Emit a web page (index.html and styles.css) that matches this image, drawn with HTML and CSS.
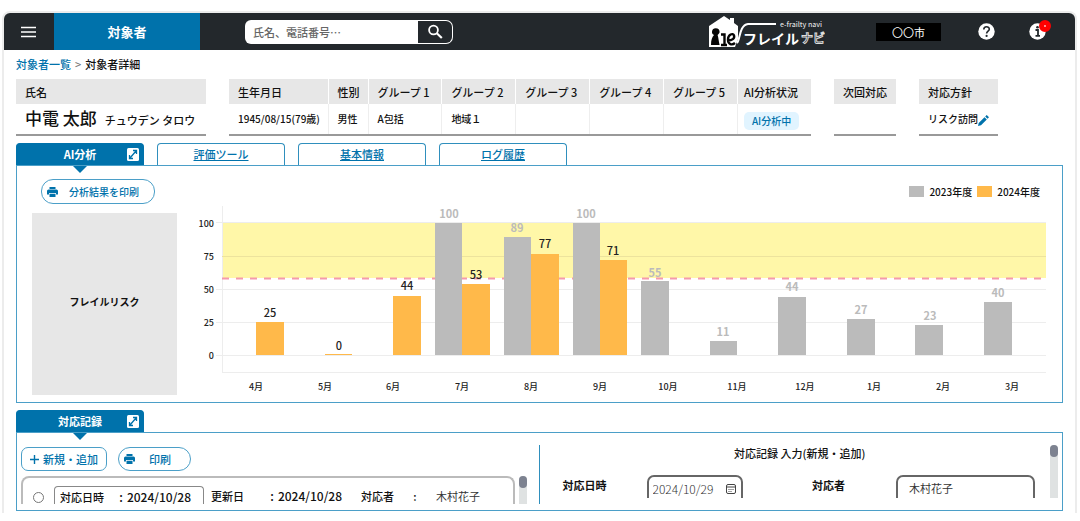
FILE: index.html
```html
<!DOCTYPE html>
<html lang="ja">
<head>
<meta charset="utf-8">
<title>対象者詳細</title>
<link rel="stylesheet" href="styles.css">
</head>
<body>
<div class="app">
  <header class="topbar">
    <button class="menu" type="button" aria-label="メニュー">
      <svg width="16" height="12" viewBox="0 0 16 12"><path d="M0 1.5h15M0 6h15M0 10.5h15" stroke="#fff" stroke-width="1.6"/></svg>
    </button>
    <div class="section-name">対象者</div>
    <form class="search" role="search">
      <input class="search-input" type="text" aria-label="検索" placeholder="氏名、電話番号…">
      <button class="search-button" type="button" aria-label="検索する">
        <svg width="16" height="16" viewBox="0 0 16 16" fill="none" stroke="#fff"><circle cx="6.5" cy="6" r="4.4" stroke-width="1.8"/><path d="M9.8 9.3L14.8 14" stroke-width="2.2"/></svg>
      </button>
    </form>
    <div class="brand">
      <svg width="116" height="33" viewBox="0 0 116 33" aria-label="フレイルナビ">
        <path d="M0 32V11L15 1l6 4V3h4v5l4 3v13l-3 8z" fill="#fff"/>
        <path d="M2 30c0-5 1-8 3-10-2-1-2-2-2-3a3.800 3.800 0 0 1 7.600 0c0 1-1 2-2 3 1 3 1 6 2 10z" fill="#050505"/>
        <path d="M12 19.500h3.500V30M12 30h6M19 25.500c4 0 7-2 6-5s-6-1-6 4 4 6 7 3.500" fill="none" stroke="#050505" stroke-width="2.400"/>
        <path d="M28 28c3-2 2-18 11-19h28" fill="none" stroke="#fff" stroke-width="2"/>
        <text x="71" y="12" class="brand-sub">e-frailty navi</text>
        <text x="34" y="29" class="brand-main">フレイル</text>
        <text x="92" y="28" class="brand-outline">ナビ</text>
      </svg>
    </div>
    <div class="city">〇〇市</div>
    <button class="icon-button help" type="button" aria-label="ヘルプ">
      <svg width="17" height="17" viewBox="0 0 17 17"><circle cx="8.500" cy="8.500" r="8.200" fill="#fff"/><path d="M5.800 6.500c0-3.600 5.500-3.500 5.500-.3 0 2-2.700 2-2.700 4.400" fill="none" stroke="#23282c" stroke-width="1.600"/><circle cx="8.600" cy="12.900" r="1.100" fill="#23282c"/></svg>
    </button>
    <button class="icon-button info" type="button" aria-label="お知らせ">
      <svg width="17" height="17" viewBox="0 0 17 17"><circle cx="8.500" cy="8.500" r="8.200" fill="#fff"/><path d="M6.500 7h2.500v5.500M6.500 12.800h4.500" fill="none" stroke="#23282c" stroke-width="1.800"/><circle cx="8.500" cy="4.300" r="1.300" fill="#23282c"/></svg>
      <span class="badge"></span>
    </button>
  </header>

  <main class="content">
    <nav class="crumbs"><a href="#">対象者一覧</a><span class="sep">&gt;</span><span>対象者詳細</span></nav>

    <div class="summary">
      <table class="facts name">
        <tr><th>氏名</th></tr>
        <tr><td><span class="person">中電 太郎</span><span class="kana">チュウデン タロウ</span></td></tr>
      </table>
      <table class="facts profile">
        <colgroup><col class="c-birth"><col class="c-sex"><col><col><col><col><col><col></colgroup>
        <tr><th>生年月日</th><th>性別</th><th>グループ 1</th><th>グループ 2</th><th>グループ 3</th><th>グループ 4</th><th>グループ 5</th><th class="status">AI分析状況</th></tr>
        <tr><td>1945/08/15(79歳)</td><td>男性</td><td>A包括</td><td>地域１</td><td></td><td></td><td></td><td class="status"><span class="chip">AI分析中</span></td></tr>
      </table>
      <table class="facts next">
        <tr><th>次回対応</th></tr>
        <tr><td></td></tr>
      </table>
      <table class="facts policy">
        <tr><th>対応方針</th></tr>
        <tr><td>リスク訪問<button class="edit" type="button" aria-label="編集"><svg width="11" height="11" viewBox="0 0 11 11" fill="#0072ab"><path d="M0 11l.7-3L6.500 2.200l2.300 2.300L3 10.300zM7.200 1.500L8.700 0 11 2.300 9.500 3.800z"/></svg></button></td></tr>
      </table>
    </div>

    <section>
      <div class="tabs">
        <div class="tab active"><span>AI分析</span>
          <button class="expand" type="button" aria-label="拡大"><svg width="12" height="13" viewBox="0 0 12 13"><rect width="12" height="13" rx="1.500" fill="#fff"/><path d="M3 10L9 3M6 2.500h3.500V6M2.500 7v3.500H6" fill="none" stroke="#0072ab" stroke-width="1.300"/></svg></button>
        </div>
        <a class="tab" href="#">評価ツール</a>
        <a class="tab" href="#">基本情報</a>
        <a class="tab" href="#">ログ履歴</a>
      </div>
      <div class="panel analysis">
        <div class="analysis-head">
          <button class="outline pill wide" type="button">
            <svg class="printer" width="11" height="10" viewBox="0 0 11 10"><path d="M2.500 0h6v2h-6zM1.500 2.500h8A1.500 1.500 0 0 1 11 4v3.500H9V6H2v1.500H0V4a1.500 1.500 0 0 1 1.500-1.500zM2.500 6.800h6V10h-6z" fill="#0072ab"/></svg>
            分析結果を印刷
          </button>
          <div class="legend"><span class="swatch y2023"></span>2023年度<span class="swatch y2024"></span>2024年度</div>
        </div>
        <div class="analysis-body">
          <div class="risk">フレイルリスク</div>
          <svg class="chart" viewBox="195 205 852 190" role="img" aria-label="フレイルリスク 月別">
            <rect x="222" y="223" width="824" height="55" fill="#fff7a8"/>
            <g class="grid">
              <path d="M216 222.500H1046M216 289.500H1046M216 322.500H1046M216 355.500H1046M222 372.500H1046M222.500 206V372"/>
              <path class="on-band" d="M222 256.500H1046"/>
            </g>
            <path class="threshold" d="M222 278.500H1046"/>
            <g class="b2023">
              <rect x="435" y="223" width="27" height="132"/>
              <rect x="504" y="237" width="27" height="118"/>
              <rect x="573" y="223" width="27" height="132"/>
              <rect x="641" y="281" width="28" height="74"/>
              <rect x="710" y="341" width="27" height="14"/>
              <rect x="778" y="297" width="28" height="58"/>
              <rect x="847" y="319" width="28" height="36"/>
              <rect x="915" y="325" width="28" height="30"/>
              <rect x="984" y="302" width="28" height="53"/>
            </g>
            <g class="b2024">
              <rect x="256" y="322" width="28" height="33"/>
              <rect x="325" y="354" width="27" height="1"/>
              <rect x="393" y="296" width="28" height="59"/>
              <rect x="462" y="284" width="28" height="71"/>
              <rect x="531" y="254" width="28" height="101"/>
              <rect x="600" y="260" width="27" height="95"/>
            </g>
            <g class="v2023">
              <text x="449" y="218">100</text><text x="517" y="232">89</text><text x="586" y="218">100</text><text x="655" y="277">55</text><text x="723" y="336">11</text><text x="792" y="291">44</text><text x="861" y="314">27</text><text x="930" y="320">23</text><text x="998" y="297">40</text>
            </g>
            <g class="v2024">
              <text x="270" y="317">25</text><text x="339" y="350">0</text><text x="407" y="290">44</text><text x="476" y="279">53</text><text x="545" y="248">77</text><text x="613" y="255">71</text>
            </g>
            <g class="ticks">
              <text x="214" y="227">100</text><text x="214" y="260">75</text><text x="214" y="293">50</text><text x="214" y="326">25</text><text x="214" y="359">0</text>
            </g>
            <g class="months">
              <text x="256" y="390">4月</text><text x="325" y="390">5月</text><text x="393" y="390">6月</text><text x="462" y="390">7月</text><text x="531" y="390">8月</text><text x="600" y="390">9月</text><text x="668" y="390">10月</text><text x="737" y="390">11月</text><text x="805" y="390">12月</text><text x="874" y="390">1月</text><text x="943" y="390">2月</text><text x="1012" y="390">3月</text>
            </g>
          </svg>
        </div>
      </div>
    </section>

    <section class="records">
      <div class="tabs">
        <div class="tab active"><span>対応記録</span>
          <button class="expand" type="button" aria-label="拡大"><svg width="12" height="13" viewBox="0 0 12 13"><rect width="12" height="13" rx="1.500" fill="#fff"/><path d="M3 10L9 3M6 2.500h3.500V6M2.500 7v3.500H6" fill="none" stroke="#0072ab" stroke-width="1.300"/></svg></button>
        </div>
      </div>
      <div class="panel record-panel">
        <div class="list-side">
          <div class="actions">
            <button class="outline add" type="button"><svg width="9" height="9" viewBox="0 0 9 9"><path d="M4.500 0v9M0 4.500h9" stroke="#0072ab" stroke-width="1.400"/></svg>新規・追加</button>
            <button class="outline pill print" type="button"><svg class="printer" width="11" height="10" viewBox="0 0 11 10"><path d="M2.500 0h6v2h-6zM1.500 2.500h8A1.500 1.500 0 0 1 11 4v3.500H9V6H2v1.500H0V4a1.500 1.500 0 0 1 1.500-1.500zM2.500 6.800h6V10h-6z" fill="#0072ab"/></svg>印刷</button>
          </div>
          <div class="scroll-row">
            <div class="card">
              <input class="pick" type="radio" name="record" id="record-1">
              <label class="when" for="record-1"><span>対応日時</span><span class="stamp"><span>:</span><span>2024/10/28</span></span></label>
              <div class="pair updated"><span>更新日</span><span class="stamp"><span>:</span><span>2024/10/28</span></span></div>
              <div class="pair staff"><span>対応者</span><span>:</span><span class="plain">木村花子</span></div>
            </div>
            <div class="scrollbar"></div>
          </div>
        </div>
        <div class="form-side">
          <form class="entry">
            <h2>対応記録 入力(新規・追加)</h2>
            <div class="fields">
              <label for="entry-date">対応日時</label>
              <div class="date-box">
                <input type="text" id="entry-date" value="2024/10/29">
                <svg width="10" height="10" viewBox="0 0 10 10" fill="none" stroke="#444"><rect x=".5" y=".5" width="9" height="9" rx="1.500"/><path d="M.5 3h9"/><path d="M2.500 5.500h5M2.500 7.500h3" stroke-dasharray="1 1"/></svg>
              </div>
              <label class="staff-label" for="entry-staff">対応者</label>
              <input class="staff-box" type="text" id="entry-staff" value="木村花子">
            </div>
          </form>
          <div class="scrollbar"></div>
        </div>
      </div>
    </section>
  </main>
</div>
</body>
</html>
```
FILE: styles.css
```css
* { box-sizing: border-box; }

body {
  margin: 0;
  background: #fff;
  color: #111;
  font: 500 11px/16px "Noto Sans CJK JP", sans-serif;
}

button, input { font: inherit; color: inherit; }
button { padding: 0; border: 0; background: none; }
svg { display: block; flex: none; }
a { color: #0072ab; }

.app {
  margin: 11px 3px 8px 2px;
  border: solid #ececec;
  border-width: 2px 2px 0;
  border-radius: 8px 8px 0 0;
}

/* Top bar */
.topbar {
  display: flex;
  align-items: center;
  height: 37px;
  background: #23282c;
  border-radius: 6px 6px 0 0;
  color: #fff;
}
.menu { display: flex; justify-content: center; width: 50px; }
.section-name {
  width: 146px;
  background: #0072ab;
  font-size: 13px;
  font-weight: 700;
  line-height: 37px;
  text-align: center;
}
.search { display: flex; width: 208px; height: 24px; margin-left: 45px; }
.search-input {
  flex: 1;
  min-width: 0;
  padding: 0 8px;
  border: 0;
  border-radius: 6px 0 0 6px;
  background: #fff;
  color: #333;
}
.search-input::placeholder { color: #666; opacity: 1; }
.search-button {
  display: flex;
  align-items: center;
  justify-content: center;
  width: 35px;
  border: 1px solid #fff;
  border-left: 0;
  border-radius: 0 7px 7px 0;
}
.brand { margin-left: auto; }
.brand-sub { font-size: 7px; fill: #ddd; }
.brand-main { font-size: 14px; font-weight: 700; fill: #fff; }
.brand-outline { font-size: 12px; font-weight: 700; fill: #23282c; stroke: #ddd; stroke-width: 1px; }
.city {
  width: 65px;
  margin-left: 51px;
  background: #000;
  font-weight: 400;
  line-height: 18px;
  text-align: center;
}
.icon-button { position: relative; }
.help { margin-left: 37px; }
.info { margin: 0 29px 0 34px; }
.badge {
  position: absolute;
  top: -3px;
  right: -5px;
  width: 12px;
  height: 12px;
  border: 5px solid #f00;
  border-radius: 50%;
  background: #fbb;
}

.content { padding: 6px 12px 2px; }
.crumbs a { text-decoration: none; }
.sep { margin: 0 4px; color: #777; }

/* Subject summary */
.summary { display: flex; gap: 23px; margin-top: 7px; padding-right: 65px; }
.facts { border-collapse: collapse; table-layout: fixed; border-bottom: 2px solid #999; }
.name { flex: 190 1 0; }
.profile { flex: 582 1 0; }
.next { flex: 62 1 0; }
.policy { flex: 79 1 0; }
.c-birth { width: 99px; }
.c-sex { width: 40px; }
.facts th {
  height: 25px;
  padding: 0 0 0 9px;
  background: #e7e7e7;
  font-weight: 500;
  text-align: left;
  white-space: nowrap;
}
.facts td { height: 31px; padding: 0 0 0 9px; font-size: 10px; white-space: nowrap; }
.profile th + th, .profile td + td { border-left: 1px solid #eee; }
.profile th + th { border-left-color: #fff; }
.facts .status { padding-left: 6px; }
.facts td.status { padding-top: 4px; }
.facts .person { font-size: 17px; }
.kana { margin-left: 8px; font-size: 11px; }
.chip {
  display: inline-block;
  padding: 1px 8px;
  border-radius: 5px;
  background: #e1f4ff;
  color: #0072ab;
}
.edit { display: inline-block; vertical-align: middle; }

/* Tabs and panels */
.tabs { display: flex; gap: 13px; margin-top: 7px; }
.tab {
  position: relative;
  width: 128px;
  height: 22px;
  border: 1px solid #2f8fbd;
  border-bottom: 0;
  border-radius: 4px 4px 0 0;
  line-height: 20px;
  text-align: center;
}
.active { background: #0072ab; border-color: #0072ab; color: #fff; font-weight: 700; }
.active::after {
  content: "";
  position: absolute;
  top: 22px;
  left: 56px;
  border: solid transparent;
  border-width: 7px 7px 0;
  border-top-color: #0072ab;
}
.expand { position: absolute; top: 4px; right: 4px; }
.panel { border: 1px solid #4b9fc8; }
.analysis { padding: 13px 15px 7px; }
.analysis-head { display: flex; align-items: center; justify-content: space-between; padding: 0 7px 0 9px; }
.outline {
  display: flex;
  align-items: center;
  height: 24px;
  border: 1px solid #4b9fc8;
  border-radius: 7px;
  background: #fff;
  color: #0072ab;
}
.pill { padding-left: 5px; border-radius: 12px; }
.wide { width: 114px; gap: 11px; height: 25px; font-size: 10px; }
.legend { display: flex; align-items: center; gap: 5px; font-size: 10px; }
.swatch { width: 15px; height: 11px; }
.y2023 { background: #bbb; }
.y2024 { background: #ffb94a; }
.analysis-body { display: flex; align-items: stretch; gap: 18px; margin-top: 1px; }
.risk {
  display: flex;
  align-items: center;
  justify-content: center;
  width: 145px;
  margin-top: 8px;
  padding-bottom: 4px;
  background: #e7e7e7;
  font-size: 10px;
  font-weight: 700;
}
.chart { flex: 1; min-width: 0; }
.grid { fill: none; stroke: #ededed; }
.on-band { stroke: #ede39d; }
.threshold { stroke: #f59aac; stroke-width: 2px; stroke-dasharray: 7px 7px; }
.b2023 { fill: #bbb; }
.b2024 { fill: #ffb94a; }
.v2023, .v2024 { font-size: 11px; text-anchor: middle; }
.v2023 { fill: #bbb; font-weight: 700; }
.v2024 { fill: #222; }
.ticks { font-size: 9px; text-anchor: end; fill: #222; }
.months { font-size: 9px; text-anchor: middle; fill: #222; }

/* Response records */
.record-panel { display: flex; height: 79px; padding: 12px 4px 6px; overflow: hidden; }
.list-side {
  display: flex;
  flex-direction: column;
  width: 50%;
  gap: 5px;
  padding: 2px 12px 0 0;
  border-right: 1px solid #2f8fbd;
}
.actions { display: flex; gap: 11px; }
.add { gap: 4px; width: 86px; padding-left: 8px; }
.print { gap: 14px; width: 73px; }
.scroll-row { display: flex; flex: 1; gap: 4px; }
.card {
  display: flex;
  align-items: flex-end;
  flex: 1;
  border: 2px solid #bbb;
  border-bottom: 0;
  border-radius: 8px 8px 0 0;
}
.pick { width: 11px; height: 11px; margin: 0 10px 1px; }
.when {
  display: flex;
  justify-content: space-between;
  width: 150px;
  height: 18px;
  padding: 2px 12px 0 5px;
  border: 1px solid #888;
  border-bottom: 0;
  border-radius: 4px 4px 0 0;
}
.stamp { display: flex; gap: 4px; font-size: 12px; }
.pair { display: flex; justify-content: space-between; }
.updated { width: 131px; margin-left: 7px; }
.staff { width: 119px; margin-left: 19px; }
.plain { font-weight: 400; color: #333; }
.scrollbar { width: 8px; background: #dfe2e2; border-radius: 4px 4px 0 0; }
.scrollbar::before { content: ""; display: block; height: 12px; border-radius: 4px; background: #7d8290; }
.form-side { display: flex; flex: 1; height: 53px; overflow: hidden; }
.entry { flex: 1; }
.entry h2 { margin: 0 0 0 10px; font-size: 11px; font-weight: 500; text-align: center; }
.fields {
  display: grid;
  grid-template-columns: 84px 96px 1fr 139px;
  align-items: start;
  margin-top: 14px;
  padding: 0 15px 0 23px;
}
.fields label { padding-top: 2px; font-weight: 700; }
.fields .staff-label { width: 84px; justify-self: end; }
.date-box, .staff-box {
  width: 100%;
  height: 30px;
  border: 2px solid #666;
  border-radius: 7px;
  background: #fff;
  font-weight: 400;
  color: #333;
}
.date-box { display: flex; align-items: flex-start; padding: 2px 5px 0 4px; }
.date-box input {
  flex: 1;
  min-width: 0;
  height: 18px;
  padding: 0;
  border: 0;
  background: none;
  font-size: 12px;
  font-weight: 300;
}
.date-box svg { margin-top: 5px; }
.staff-box { padding: 0 11px 4px; }
```
